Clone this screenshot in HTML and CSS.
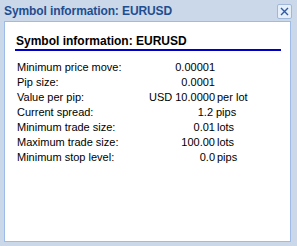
FILE: index.html
```html
<!DOCTYPE html>
<html>
<head>
  <title>Symbol information</title>
  <link rel="stylesheet" href="styles.css">
</head>
<body>
  <div class="dialog">
    <div class="titlebar">
      <span class="title">Symbol information: EURUSD</span>
      <button class="close" title="Close">
        <svg width="9" height="9" viewBox="0 0 9 9"><path d="M1 1 L8 8 M8 1 L1 8" stroke="#2a5aa8" stroke-width="1.4"/></svg>
      </button>
    </div>

    <div class="panel">
      <div class="heading">Symbol information: EURUSD</div>
      <div class="info">
        <span class="label">Minimum price move:</span><span class="num">0.00001</span><span class="unit"></span>
        <span class="label">Pip size:</span><span class="num">0.0001</span><span class="unit"></span>
        <span class="label">Value per pip:</span><span class="num">USD 10.0000</span><span class="unit">per lot</span>
        <span class="label">Current spread:</span><span class="num narrow">1.2</span><span class="unit tight">pips</span>
        <span class="label">Minimum trade size:</span><span class="num">0.01</span><span class="unit">lots</span>
        <span class="label">Maximum trade size:</span><span class="num">100.00</span><span class="unit">lots</span>
        <span class="label">Minimum stop level:</span><span class="num">0.0</span><span class="unit">pips</span>
      </div>
    </div>
  </div>
</body>
</html>
```

FILE: styles.css
```css
:root {
  --frame-color: #cbd8e9;
  --title-color: #1f4d8f;
  --panel-border: #9dbbe6;
  --rule-color: #0000c4;
}

* {
  margin: 0;
  padding: 0;
  box-sizing: border-box;
  font-family: 'Liberation Sans', Arial, sans-serif;
}

body {
  background-color: var(--frame-color);
  width: 297px;
  height: 246px;
  overflow: hidden;
}

.dialog {
  display: flex;
  flex-direction: column;
  height: 246px;
  padding: 0 6px 4px 4px;
}

.titlebar {
  display: flex;
  align-items: center;
  justify-content: space-between;
  height: 21px;
  padding-top: 1px;
}

.title {
  color: var(--title-color);
  font-weight: bold;
  font-size: 12px;
  letter-spacing: -0.1px;
}

.close {
  width: 15px;
  height: 15px;
  margin-right: -1px;
  display: flex;
  align-items: center;
  justify-content: center;
  background: #e6eef8;
  border: 1px solid #9fb8da;
  border-radius: 2px;
}

.panel {
  flex: 1;
  background: white;
  border: 1px solid var(--panel-border);
  padding: 12px 9px 0 10px;
}

.heading {
  font-size: 12px;
  font-weight: bold;
  color: black;
  padding-left: 1px;
  padding-bottom: 1px;
  border-bottom: 2px solid var(--rule-color);
}

.info {
  display: grid;
  grid-template-columns: 120px 78px auto;
  margin-top: 9px;
  padding-left: 2px;
  font-size: 11px;
  line-height: 15px;
  color: black;
}

.num {
  text-align: right;
}

.num.narrow {
  padding-right: 2px;
}

.unit {
  padding-left: 2px;
}

.unit.tight {
  padding-left: 1px;
}
```
